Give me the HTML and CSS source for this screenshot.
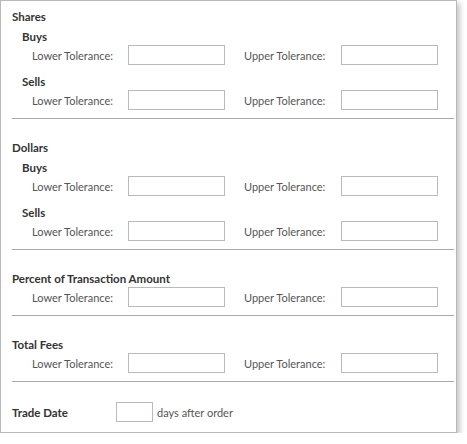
FILE: index.html
```html
<!DOCTYPE html>
<html lang="en">
<head>
    <meta charset="UTF-8">
    <title>Tolerance Settings</title>
    <link rel="stylesheet" href="styles.css">
</head>
<body>
    <div class="panel">
        <div class="section">
            <h3>Shares</h3>
            <h4>Buys</h4>
            <div class="row">
                <label>Lower Tolerance:</label><input type="text">
                <label class="upper">Upper Tolerance:</label><input type="text">
            </div>
            <h4 class="next">Sells</h4>
            <div class="row">
                <label>Lower Tolerance:</label><input type="text">
                <label class="upper">Upper Tolerance:</label><input type="text">
            </div>
        </div>
        <div class="section">
            <h3>Dollars</h3>
            <h4>Buys</h4>
            <div class="row">
                <label>Lower Tolerance:</label><input type="text">
                <label class="upper">Upper Tolerance:</label><input type="text">
            </div>
            <h4 class="next">Sells</h4>
            <div class="row">
                <label>Lower Tolerance:</label><input type="text">
                <label class="upper">Upper Tolerance:</label><input type="text">
            </div>
        </div>
        <div class="section">
            <h3>Percent of Transaction Amount</h3>
            <div class="row">
                <label>Lower Tolerance:</label><input type="text">
                <label class="upper">Upper Tolerance:</label><input type="text">
            </div>
        </div>
        <div class="section">
            <h3>Total Fees</h3>
            <div class="row">
                <label>Lower Tolerance:</label><input type="text">
                <label class="upper">Upper Tolerance:</label><input type="text">
            </div>
        </div>
        <div class="section last">
            <div class="trade-row">
                <span class="trade-label">Trade Date</span>
                <input type="text" class="days">
                <span class="days-text">days after order</span>
            </div>
        </div>
    </div>
</body>
</html>
```
FILE: styles.css
```css
/* Base */
body {
    margin: 0;
    padding: 0;
    font-family: 'Lato', sans-serif;
    background-color: #ffffff;
}

/* Outer panel */
.panel {
    width: 457px;
    height: 433px;
    box-sizing: border-box;
    border: 1px solid #b9b9b9;
    box-shadow: 3px 3px 5px rgba(0, 0, 0, 0.22);
    padding: 4px 2px 0 11px;
    background-color: #ffffff;
}

/* Sections */
.section {
    padding: 17px 0 8px;
    border-bottom: 1px solid #a9a9a9;
}

.section:first-child {
    padding-top: 0;
}

.section.last {
    border-bottom: none;
    padding-top: 20px;
}

h3, h4 {
    margin: 0;
    padding-top: 3px;
    font-size: 11.5px;
    font-weight: 700;
    line-height: 17px;
    color: #333;
}

h4 {
    padding-left: 10px;
}

h4.next {
    margin-top: 5px;
}

/* Tolerance rows */
.row {
    display: flex;
    align-items: center;
    height: 20px;
    padding-left: 20px;
    font-size: 11px;
    color: #555;
}

.row label {
    width: 96px;
}

.row label.upper {
    width: 97px;
    margin-left: 19px;
}

input[type="text"] {
    width: 97px;
    height: 20px;
    box-sizing: border-box;
    margin: 0;
    padding: 2px 4px;
    border: 1px solid #bababa;
    background-color: #ffffff;
    font-family: 'Lato', sans-serif;
    font-size: 11px;
    outline: none;
}

/* Trade date */
.trade-row {
    display: flex;
    align-items: center;
    height: 20px;
}

.trade-label {
    width: 104px;
    font-size: 11.5px;
    font-weight: 700;
    color: #333;
}

input.days {
    width: 37px;
}

.days-text {
    margin-left: 4px;
    font-size: 11px;
    color: #555;
}
```
